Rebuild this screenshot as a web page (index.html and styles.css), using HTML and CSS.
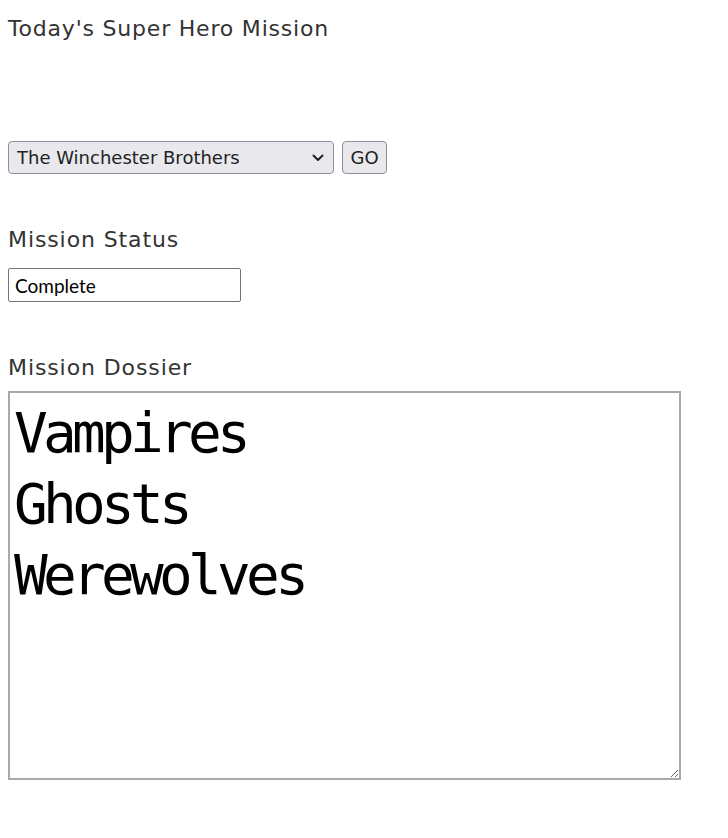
FILE: index.html
```html
<!DOCTYPE html>
<html lang="en">
<head>
<meta charset="utf-8">
<title>Today's Super Hero Mission</title>
<link rel="stylesheet" href="styles.css">
</head>
<body>
<div class="page">
  <h1 class="title">Today's Super Hero Mission</h1>
  <div class="picker">
    <div class="select-wrap">
      <select class="hero-select">
        <option>The Winchester Brothers</option>
      </select>
      <svg class="chevron" width="12" height="8" viewBox="0 0 12 8" aria-hidden="true"><path d="M1.5 1.5 L6 6 L10.5 1.5" fill="none" stroke="#222" stroke-width="2" stroke-linecap="round" stroke-linejoin="round"/></svg>
    </div>
    <button class="go-btn">GO</button>
  </div>
  <label class="label status-label" for="status">Mission Status</label>
  <input id="status" class="status-input" type="text" value="Complete">
  <label class="label dossier-label" for="dossier">Mission Dossier</label>
  <textarea id="dossier" class="dossier">Vampires
Ghosts
Werewolves</textarea>
</div>
</body>
</html>
```
FILE: styles.css
```css
html, body {
  margin: 0;
  padding: 0;
  background: #ffffff;
}

.page {
  padding: 8px;
  display: flex;
  flex-direction: column;
  align-items: flex-start;
}

.title {
  margin: 0;
  padding-top: 6px;
  font-family: "DejaVu Sans", sans-serif;
  font-weight: 400;
  font-size: 22px;
  line-height: 30px;
  letter-spacing: 0.8px;
  color: #333333;
}

.picker {
  margin-top: 97px;
  display: flex;
  gap: 8px;
  align-items: stretch;
}

.select-wrap {
  position: relative;
  display: flex;
}

.hero-select {
  appearance: none;
  -webkit-appearance: none;
  box-sizing: border-box;
  width: 326px;
  height: 33px;
  margin: 0;
  padding: 0 30px 0 8px;
  border: 1px solid #8f8f9d;
  border-radius: 4px;
  background: #e9e9ed;
  font-family: "DejaVu Sans", sans-serif;
  font-size: 18px;
  color: #222222;
}

.chevron {
  position: absolute;
  right: 10px;
  top: 13px;
  pointer-events: none;
}

.go-btn {
  box-sizing: border-box;
  width: 45px;
  height: 33px;
  margin: 0;
  padding: 0;
  border: 1px solid #8f8f9d;
  border-radius: 4px;
  background: #e9e9ed;
  font-family: "DejaVu Sans", sans-serif;
  font-size: 18px;
  color: #222222;
}

.label {
  font-family: "DejaVu Sans", sans-serif;
  font-size: 22px;
  line-height: 30px;
  letter-spacing: 0.9px;
  color: #333333;
}

.status-label {
  margin-top: 51px;
}

.status-input {
  box-sizing: border-box;
  margin-top: 13px;
  width: 233px;
  height: 34px;
  padding: 0 6px;
  border: 1px solid #767676;
  border-radius: 2px;
  font-family: "Lato", sans-serif;
  font-size: 19px;
  color: #000000;
}

.dossier-label {
  margin-top: 51px;
}

.dossier {
  box-sizing: border-box;
  margin-top: 8px;
  width: 673px;
  height: 389px;
  padding: 4px 4px;
  border: 2px solid #a9a9a9;
  font-family: "DejaVu Sans Mono", monospace;
  font-size: 56px;
  line-height: 71px;
  letter-spacing: -4.7px;
  color: #000000;
  background: #ffffff;
}
```
